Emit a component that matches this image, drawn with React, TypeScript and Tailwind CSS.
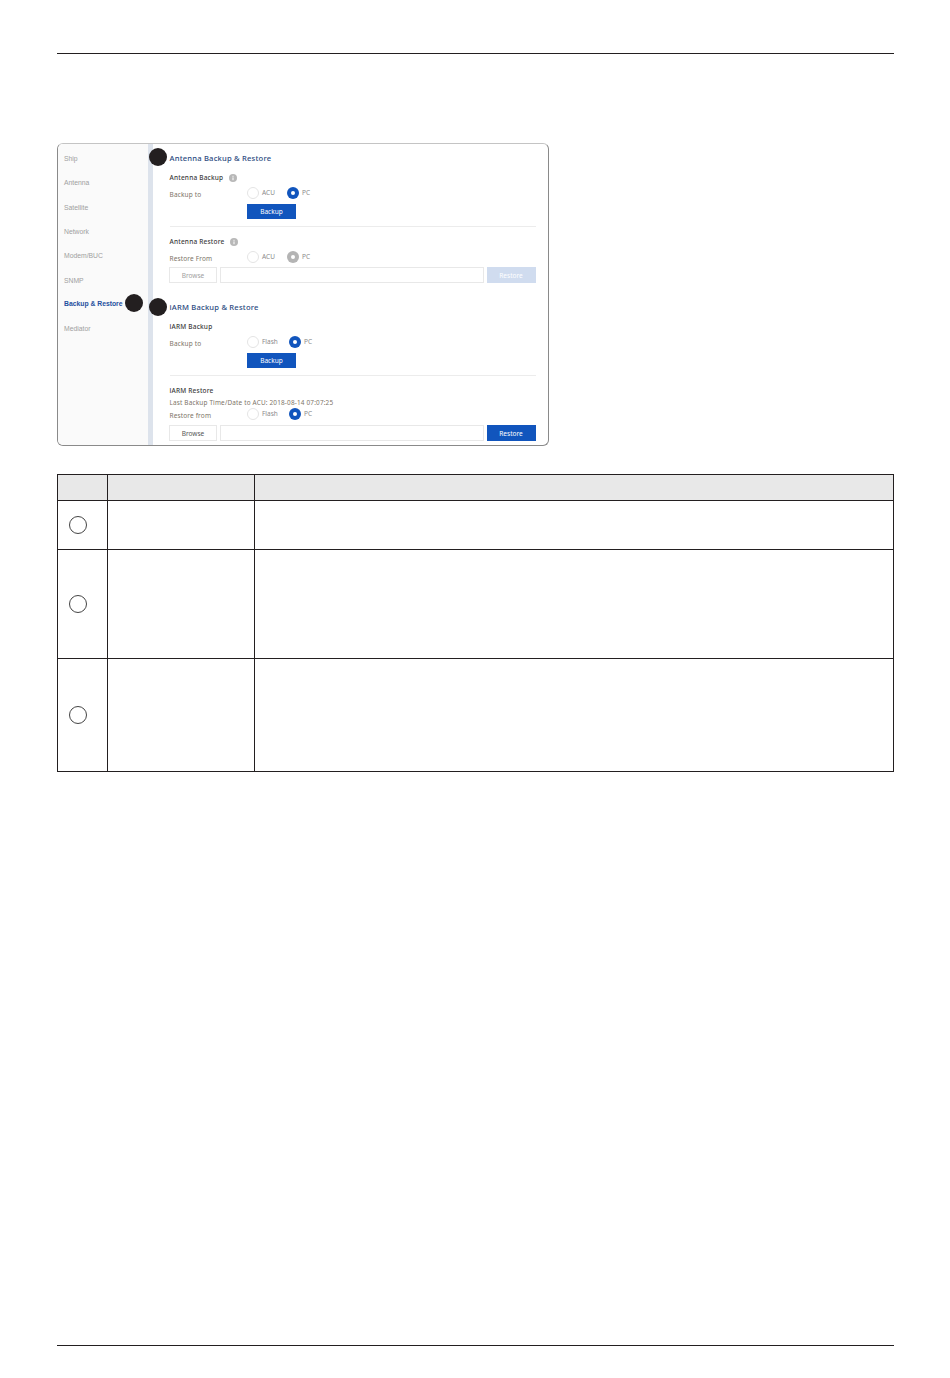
import React from 'react';

const menuItems = ['Ship', 'Antenna', 'Satellite', 'Network', 'Modem/BUC', 'SNMP', 'Backup & Restore', 'Mediator'];

const SectionTitle: React.FC<{ text: string; className: string }> = ({ text, className }) => (
  <div className={`h-3 flex items-center text-[7.6px] font-medium tracking-[0.2px] text-[#2b4a80] whitespace-nowrap ${className}`}>{text}</div>
);

const SubTitle: React.FC<{ text: string; className: string; children?: React.ReactNode }> = ({ text, className, children }) => (
  <div className={`h-3 flex items-center text-[6.5px] font-medium tracking-[0.2px] text-[#3c3c3c] whitespace-nowrap ${className}`}>
    {text}
    {children}
  </div>
);

const InfoIcon: React.FC<{ className: string }> = ({ className }) => (
  <svg width="8" height="8" viewBox="0 0 8 8" className={className}>
    <circle cx="4" cy="4" r="4" fill="#b8b8b8" />
    <rect x="3.5" y="3.4" width="1" height="2.8" fill="#fff" />
    <rect x="3.5" y="1.8" width="1" height="1" fill="#fff" />
  </svg>
);

const Radio: React.FC<{ label: string; checked?: boolean; disabled?: boolean; className: string }> = ({ label, checked, disabled, className }) => (
  <div className={`flex items-center gap-[3px] ${className}`}>
    {checked ? (
      <span className={`w-3 h-3 rounded-full flex items-center justify-center ${disabled ? 'bg-[#b4b4b4]' : 'bg-[#1155bd]'}`}>
        <span className="w-1 h-1 rounded-full bg-white" />
      </span>
    ) : (
      <span className="w-3 h-3 rounded-full border border-[#e4e4e4] bg-white" />
    )}
    <span className="text-[6.5px] text-[#8a8a8a]">{label}</span>
  </div>
);

const RadioRow: React.FC<{
  label: string;
  first: string;
  firstWidth: string;
  disabled?: boolean;
  className: string;
  labelClass: string;
}> = ({ label, first, firstWidth, disabled, className, labelClass }) => (
  <div className={`h-3 flex items-center ${className}`}>
    <div className={`w-[77.5px] text-[6.5px] tracking-[0.15px] text-[#7d7468] whitespace-nowrap ${labelClass}`}>{label}</div>
    <Radio label={first} className={firstWidth} />
    <Radio label="PC" checked disabled={disabled} className="" />
  </div>
);

const BlueButton: React.FC<{ className: string }> = ({ className }) => (
  <div className={`ml-[77.5px] w-[49px] h-[15px] bg-[#1155bd] text-white text-[6.5px] flex items-center justify-center ${className}`}>Backup</div>
);

const Divider: React.FC<{ className: string }> = ({ className }) => <div className={`h-px bg-[#ececec] ${className}`} />;

const BrowseRow: React.FC<{ disabled?: boolean; className: string }> = ({ disabled, className }) => (
  <div className={`h-4 -ml-[0.5px] flex gap-[3px] ${className}`}>
    <div className={`w-[48px] pt-px border border-[#e8e8e8] flex items-center justify-center text-[6.5px] ${disabled ? 'text-[#a0a0a0]' : 'text-[#555]'}`}>Browse</div>
    <div className="flex-1 border border-[#e8e8e8] bg-white" />
    <div className={`w-[49px] pt-px flex items-center justify-center text-[6.5px] ${disabled ? 'bg-[#d0dcef] text-white' : 'bg-[#1155bd] text-white'}`}>Restore</div>
  </div>
);

const Marker: React.FC<{ className: string }> = ({ className }) => (
  <span className={`absolute w-[18px] h-[18px] rounded-full bg-[#231f20] ${className}`} />
);

const Panel = () => (
  <div className="relative mt-[89px] w-[492px] h-[303px] flex rounded-[6px] border border-[#8a8a8a] border-t-[#c4c4c4] overflow-hidden bg-white">
    <aside className="w-[90px] bg-[#fafafa] pt-[3px] pl-[6px] font-['Liberation_Sans',sans-serif] text-[6.8px]">
      {menuItems.map((item) => (
        <div
          key={item}
          className={`h-[24.3px] flex items-center whitespace-nowrap ${item === 'Backup & Restore' ? 'font-bold text-[#1f4f9e] -translate-y-px' : 'text-[#a0a0a0]'}`}
        >
          {item}
        </div>
      ))}
    </aside>
    <div className="w-[5px] bg-[#dde3ec]" />
    <main className="flex-1 pl-[16.5px] pr-[12.5px] font-['Noto_Sans',sans-serif]">
      <SectionTitle text="Antenna Backup & Restore" className="mt-[9px]" />
      <SubTitle text="Antenna Backup" className="mt-[7px]">
        <InfoIcon className="ml-[6px]" />
      </SubTitle>
      <RadioRow label="Backup to" first="ACU" firstWidth="w-[40px]" className="mt-[3px]" labelClass="translate-y-[2px]" />
      <BlueButton className="mt-[5px]" />
      <Divider className="mt-[7px]" />
      <SubTitle text="Antenna Restore" className="mt-[9px]">
        <InfoIcon className="ml-[6px]" />
      </SubTitle>
      <RadioRow label="Restore From" first="ACU" firstWidth="w-[40px]" disabled className="mt-[3px]" labelClass="translate-y-[2px]" />
      <BrowseRow disabled className="mt-[4px]" />

      <SectionTitle text="iARM Backup & Restore" className="mt-[19px]" />
      <SubTitle text="iARM Backup" className="mt-[7px]" />
      <RadioRow label="Backup to" first="Flash" firstWidth="w-[42px]" className="mt-[3px]" labelClass="translate-y-[2px]" />
      <BlueButton className="mt-[5px]" />
      <Divider className="mt-[7px]" />
      <SubTitle text="iARM Restore" className="mt-[9px]" />
      <div className="h-[11px] flex items-center text-[6.4px] tracking-[0.18px] text-[#7d7468] whitespace-nowrap">
        Last Backup Time/Date to ACU: 2018-08-14 07:07:25
      </div>
      <RadioRow label="Restore from" first="Flash" firstWidth="w-[42px]" className="" labelClass="translate-y-[2px]" />
      <BrowseRow className="mt-[5px]" />
    </main>
    <Marker className="left-[91px] top-[4px]" />
    <Marker className="left-[67px] top-[150px]" />
    <Marker className="left-[91px] top-[154px]" />
  </div>
);

const Num = () => <span className="w-[18px] h-[18px] rounded-full border border-[#444] bg-white" />;

const Table = () => (
  <div className="mt-7 grid grid-cols-[49px_147px_1fr] grid-rows-[25px_49px_109px_113px] border border-[#231f20]">
    <div className="bg-[#e8e8e8]" />
    <div className="bg-[#e8e8e8] border-l border-[#231f20]" />
    <div className="bg-[#e8e8e8] border-l border-[#231f20]" />
    {[0, 1, 2].map((row) => (
      <React.Fragment key={row}>
        <div className="border-t border-[#231f20] pl-[11px] flex items-center">
          <Num />
        </div>
        <div className="border-t border-l border-[#231f20]" />
        <div className="border-t border-l border-[#231f20]" />
      </React.Fragment>
    ))}
  </div>
);

export default function App() {
  return (
    <div className="min-h-[1378px] bg-white flex flex-col pl-[57px] pr-[56px] pt-[53px] pb-[32px]">
      <div className="h-px bg-[#231f20]" />
      <Panel />
      <Table />
      <div className="mt-auto h-px bg-[#231f20]" />
    </div>
  );
}
